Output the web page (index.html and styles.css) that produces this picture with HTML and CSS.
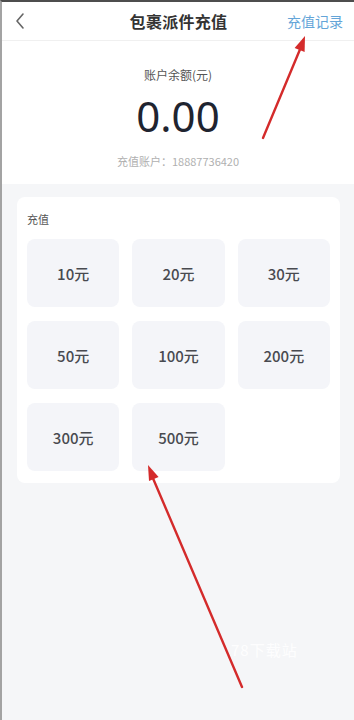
FILE: index.html
```html
<!DOCTYPE html>
<html lang="zh-CN">
<head>
<meta charset="utf-8">
<title>包裹派件充值</title>
<link rel="stylesheet" href="styles.css">
</head>
<body>
<div class="screen">
  <header class="topbar">
    <div class="back">
      <svg width="12" height="18" viewBox="0 0 12 18"><path d="M9 2 L3 9 L9 16" fill="none" stroke="#666" stroke-width="1.6" stroke-linecap="round" stroke-linejoin="round"/></svg>
    </div>
    <h1 class="title">包裹派件充值</h1>
    <div class="records">充值记录</div>
  </header>
  <section class="balance">
    <div class="balance-label">账户余额(元)</div>
    <div class="balance-value">0.00</div>
    <div class="balance-account">充值账户：18887736420</div>
  </section>
  <section class="card">
    <div class="card-label">充值</div>
    <div class="grid">
      <div class="amount">10元</div>
      <div class="amount">20元</div>
      <div class="amount">30元</div>
      <div class="amount">50元</div>
      <div class="amount">100元</div>
      <div class="amount">200元</div>
      <div class="amount">300元</div>
      <div class="amount">500元</div>
    </div>
  </section>
  <div class="watermark">78下载站</div>
  <svg class="arrows" width="354" height="720" viewBox="0 0 354 720">
    <line x1="263" y1="138" x2="301" y2="47" stroke="#d42b2b" stroke-width="2.4" stroke-linecap="round"/>
    <polygon points="305,36 304.6,52 294.6,48" fill="#d42b2b"/>
    <line x1="242" y1="687" x2="152" y2="476" stroke="#d42b2b" stroke-width="2.4" stroke-linecap="round"/>
    <polygon points="148,465 158.6,477 149,481" fill="#d42b2b"/>
  </svg>
</div>
</body>
</html>
```
FILE: styles.css
```css
* { box-sizing: border-box; }
html, body { margin: 0; padding: 0; }
body {
  font-family: "Noto Sans CJK SC", "Noto Sans", sans-serif;
  background: #f5f6f8;
}
.screen {
  position: relative;
  width: 354px;
  height: 720px;
  overflow: hidden;
  border-top: 2px solid #4d4d4d;
  border-left: 2px solid #a3a3a3;
  background: #f5f6f8;
}
.topbar {
  display: grid;
  grid-template-columns: 1fr auto 1fr;
  align-items: center;
  height: 39px;
  background: #fff;
  border-bottom: 1px solid #f0f0f0;
  padding: 0 11px 0 12px;
}
.back { display: flex; align-items: center; }
.title {
  margin: 0;
  font-size: 16px;
  font-weight: 700;
  color: #333;
  letter-spacing: 0.3px;
}
.records {
  justify-self: end;
  font-size: 14px;
  color: #64a5d8;
}
.balance {
  background: #fff;
  display: flex;
  flex-direction: column;
  align-items: center;
  padding: 26px 0 15px;
}
.balance-label {
  font-size: 12px;
  line-height: 16px;
  color: #555;
}
.balance-value {
  font-family: "Noto Sans", sans-serif;
  font-size: 42px;
  line-height: 54px;
  margin-top: 6px;
  color: #1f2430;
}
.balance-account {
  font-size: 11px;
  line-height: 16px;
  color: #b0b0b0;
  margin-top: 10px;
}
.card {
  margin: 13px 14px 0 15px;
  background: #fff;
  border-radius: 8px;
  padding: 14px 10px 12px;
}
.card-label {
  font-size: 11px;
  line-height: 16px;
  color: #555;
  margin-bottom: 12px;
}
.grid {
  display: grid;
  grid-template-columns: repeat(3, 1fr);
  grid-auto-rows: 68px;
  gap: 14px 13px;
}
.amount {
  display: flex;
  align-items: center;
  justify-content: center;
  background: #f4f5f9;
  border-radius: 8px;
  font-size: 15px;
  font-weight: 500;
  color: #484a50;
}
.watermark {
  position: absolute;
  left: 229px;
  top: 637px;
  font-size: 15px;
  color: rgba(255,255,255,0.9);
  letter-spacing: 1px;
}
.arrows {
  position: absolute;
  left: -2px;
  top: -2px;
  pointer-events: none;
}
```
